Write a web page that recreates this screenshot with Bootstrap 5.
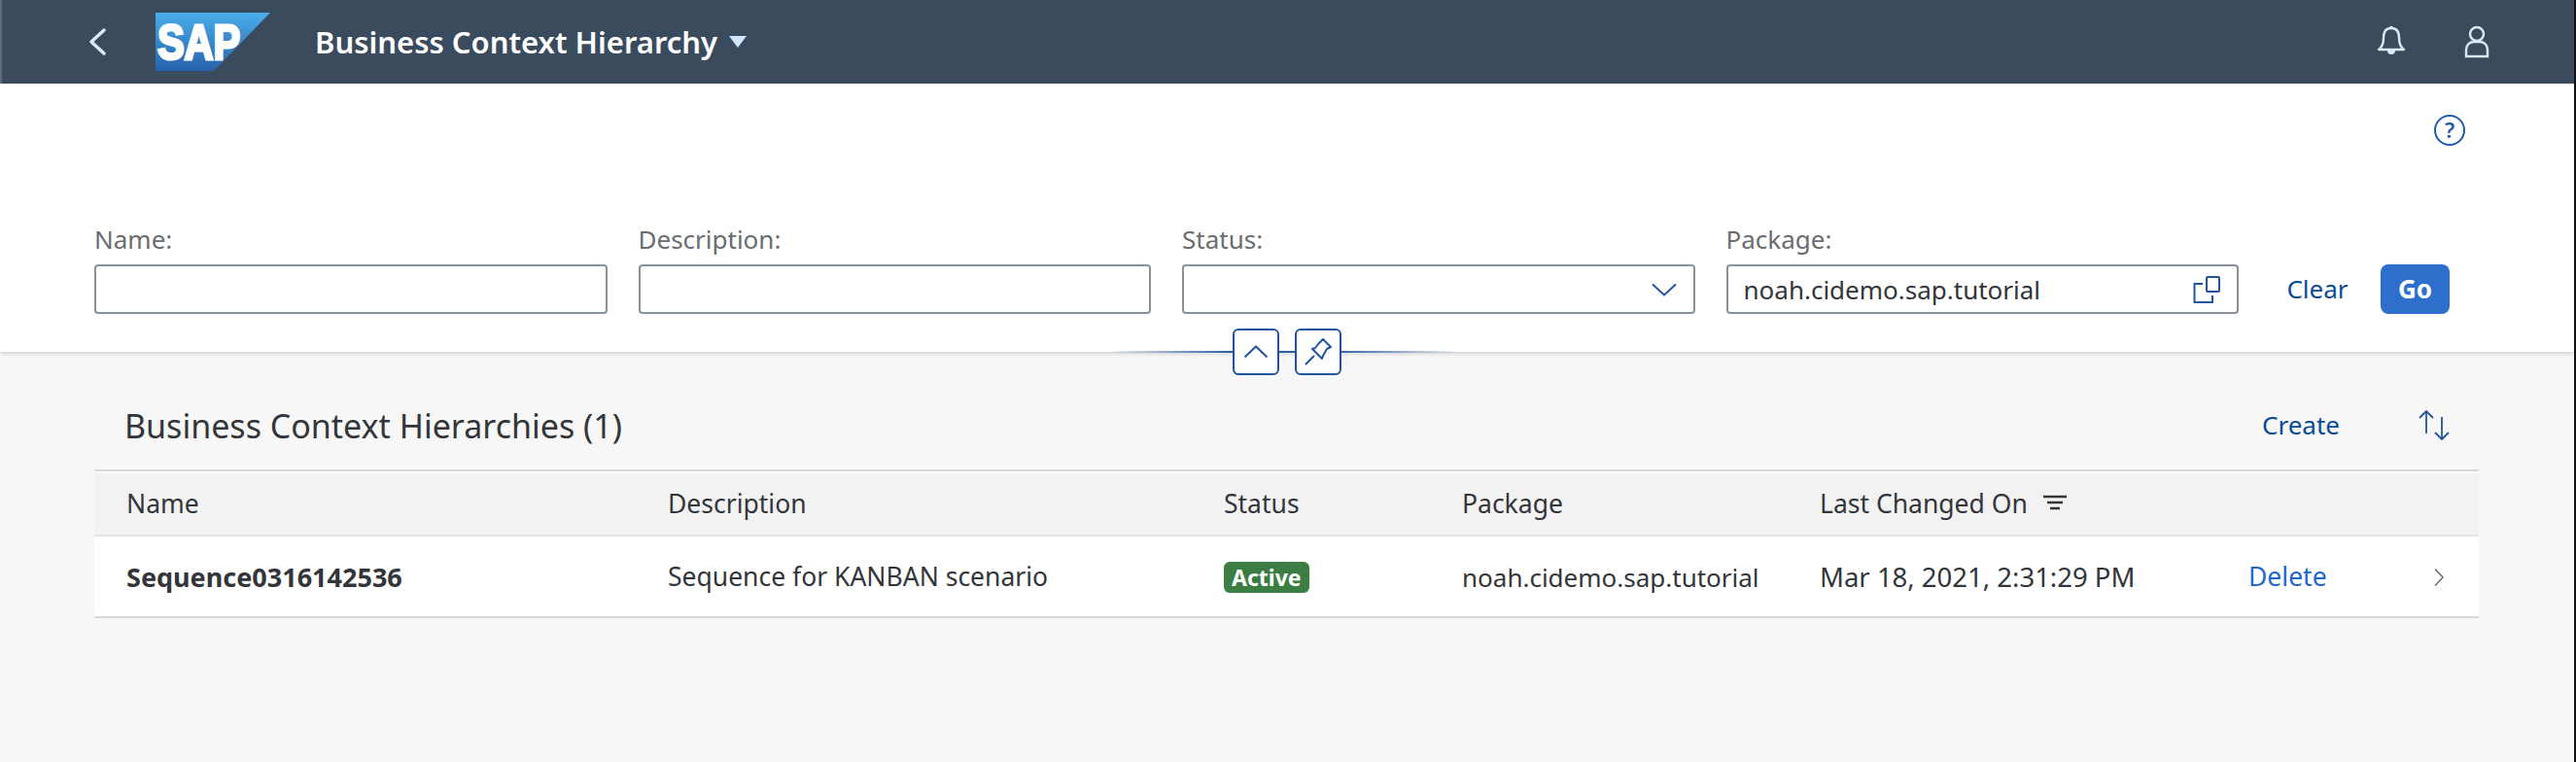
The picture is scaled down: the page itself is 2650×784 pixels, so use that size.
<!DOCTYPE html>
<html lang="en">
<head>
    <meta charset="UTF-8">
    <meta name="viewport" content="width=device-width, initial-scale=1.0">
    <title>Business Context Hierarchy</title>
    <link href="https://cdn.jsdelivr.net/npm/bootstrap@5.3.3/dist/css/bootstrap.min.css" rel="stylesheet">
    <style>
        html, body { height: 100%; }
        body { font-family: "Noto Sans", "Liberation Sans", sans-serif; font-size: 26px; color: #32363a; background: #f7f7f7; overflow: hidden; border-right: 2px solid #111; }
        svg { display: block; }

        .shell-bar { height: 86px; background: #3a4b5e; padding: 0 87px 0 0; flex-wrap: nowrap; border-left: 2px solid #5f6c7b; }
        .shell-back { margin-left: 86px; width: 24px; }
        .shell-logo { margin-left: 48px; }
        .shell-title { margin: 0 0 0 46px; padding: 0; font-size: 31px; font-weight: 600; color: #fff; line-height: 1; }
        .shell-caret { margin-left: 12px; }
        .shell-icons { gap: 60px; }

        .filter-bar { height: 276px; background: #fff; padding: 32px 112px 39px 97px; box-shadow: 0 2px 4px rgba(0,0,0,.15); position: relative; z-index: 2; }
        .filter-row { gap: 32px; }
        .filter-field { width: 527.5px; flex: none; }
        .filter-label { margin: 0 0 11px; font-size: 26px; line-height: 30px; color: #6a6d70; display: block; }
        .filter-input { height: 51px; border: 2px solid #89919a; border-radius: 4px; padding: 0 56px 0 16px; font-size: 26px; color: #32363a; box-shadow: none; }
        .input-icon { position: absolute; right: 19px; top: 50%; transform: translateY(-50%); }
        .btn-clear { color: #0a4a96; font-size: 26px; padding: 0; border: 0; width: 98px; height: 51px; flex: none; }
        .btn-go { background: #2f6fcc; border: 0; color: #fff; font-size: 26px; font-weight: 700; width: 71px; height: 51px; border-radius: 8px; padding: 0; margin-left: -16px; flex: none; }

        .collapse-bar { position: absolute; left: 1140px; top: 252px; width: 360px; height: 48px; }
        .collapse-line { position: absolute; left: 0; right: 0; top: 23px; height: 2px; background: linear-gradient(90deg, rgba(10,74,150,0), #2a5ea6 35%, #2a5ea6 65%, rgba(10,74,150,0)); }
        .collapse-btn { position: absolute; top: 0; width: 48px; height: 48px; border: 2px solid #1f569f; border-radius: 6px; background: #fff; padding: 0; display: flex; align-items: center; justify-content: center; }

        .list-wrap { padding: 0 98px 0 97px; }
        .list-toolbar { height: 121px; padding: 30px 30px 0 31px; }
        .list-title { font-size: 34px; font-weight: 400; margin: 0; color: #32363a; line-height: 1; }
        .toolbar-link { color: #0a4a96; text-decoration: none; font-size: 26px; margin-right: 80px; }

        .hier-table { margin: 0; table-layout: fixed; width: 100%; border-collapse: separate; border-spacing: 0; border-top: 2px solid #d9d9d9; }
        .hier-table th { background: #f2f2f2; height: 67px; font-weight: 400; font-size: 26.500px; color: #32363a; border-top: 2px solid #fafafa; border-bottom: 2px solid #e4e4e4; padding: 0 0 0 33px; vertical-align: middle; }
        .hier-table td { background: #fff; height: 84px; font-size: 26.500px; color: #32363a; border-bottom: 2px solid #d9d9d9; padding: 2px 0 0 33px; vertical-align: middle; white-space: nowrap; }
        .hier-table td.seq-name { font-size: 27px; }
        .hier-table td.date-cell { font-size: 27.500px; }
        .hier-table td.pkg-cell { font-size: 26px; }
        .status-pill { background: #3b7d43; color: #fff; font-size: 23px; font-weight: 700; line-height: 32px; border-radius: 6px; padding: 0 8px; display: inline-block; }
        .delete-link { color: #1e68cc; text-decoration: none; }
    </style>
</head>
<body>
    <nav class="navbar shell-bar">
        <div class="d-flex align-items-center">
            <svg class="shell-back" width="24" height="30" viewBox="0 0 24 30"><path d="M19 3 6 15l13 12" fill="none" stroke="#d9e8fb" stroke-width="3.500" stroke-linecap="round" stroke-linejoin="round"/></svg>
            <svg class="shell-logo" width="118" height="60" viewBox="0 0 118 60">
                <defs><linearGradient id="sapGrad" x1="0" y1="0" x2="0" y2="1"><stop offset="0" stop-color="#4aaeea"/><stop offset="1" stop-color="#2661ac"/></linearGradient></defs>
                <polygon points="0,0 118,0 60,60 0,60" fill="url(#sapGrad)"/>
                <text x="2" y="48" font-family="Liberation Sans" font-weight="700" font-size="50" textLength="85" lengthAdjust="spacingAndGlyphs" fill="#fff" stroke="#fff" stroke-width="3">SAP</text>
            </svg>
            <span class="navbar-brand shell-title">Business Context Hierarchy</span>
            <svg class="shell-caret" width="18" height="13" viewBox="0 0 18 13"><polygon points="0,0 18,0 9,12" fill="#d1e5ff"/></svg>
        </div>
        <div class="d-flex align-items-center shell-icons">
            <svg width="30" height="34" viewBox="0 0 30 34"><path d="M15 3c-6 0-8 4-8 10 0 6-1 9-5 12h26c-4-3-5-6-5-12 0-6-2-10-8-10Z" fill="none" stroke="#d9e8fb" stroke-width="2.400" stroke-linejoin="round"/><path d="M11 26h8c0 3-2 4-4 4s-4-1-4-4Z" fill="#d9e8fb"/><circle cx="15" cy="2.500" r="1.800" fill="#d9e8fb"/></svg>
            <svg width="26" height="34" viewBox="0 0 26 34"><circle cx="13" cy="9" r="7" fill="none" stroke="#d9e8fb" stroke-width="2.400"/><path d="M2 32V25c0-5 4-8 8-8h6c4 0 8 3 8 8v7Z" fill="none" stroke="#d9e8fb" stroke-width="2.400"/></svg>
        </div>
    </nav>

    <div class="filter-bar d-flex flex-column justify-content-between">
        <div class="d-flex justify-content-end">
            <svg width="32" height="32" viewBox="0 0 32 32"><circle cx="16" cy="16" r="15" fill="none" stroke="#1f5ba8" stroke-width="2"/><text x="16" y="24" text-anchor="middle" font-family="Noto Sans" font-weight="600" font-size="22" fill="#1f5ba8">?</text></svg>
        </div>
        <form class="d-flex align-items-end filter-row">
            <div class="filter-field">
                <label class="filter-label" for="fName">Name:</label>
                <input class="form-control filter-input" id="fName" type="text">
            </div>
            <div class="filter-field">
                <label class="filter-label" for="fDesc">Description:</label>
                <input class="form-control filter-input" id="fDesc" type="text">
            </div>
            <div class="filter-field">
                <label class="filter-label" for="fStatus">Status:</label>
                <div class="position-relative">
                    <input class="form-control filter-input" id="fStatus" type="text">
                    <svg class="input-icon" width="26" height="14" viewBox="0 0 26 14"><path d="M1 1.500 13 12.500 25 1.500" fill="none" stroke="#1f569f" stroke-width="2"/></svg>
                </div>
            </div>
            <div class="filter-field">
                <label class="filter-label" for="fPkg">Package:</label>
                <div class="position-relative">
                    <input class="form-control filter-input" id="fPkg" type="text" value="noah.cidemo.sap.tutorial">
                    <svg class="input-icon" width="28" height="28" viewBox="0 0 28 28"><rect x="14" y="1" width="13" height="15" rx="1" fill="none" stroke="#1f569f" stroke-width="2"/><path d="M10 8H1.500V27H20V20" fill="none" stroke="#1f569f" stroke-width="2"/></svg>
                </div>
            </div>
            <button type="button" class="btn btn-link btn-clear text-decoration-none">Clear</button>
            <button type="button" class="btn btn-go">Go</button>
        </form>
        <div class="collapse-bar">
            <div class="collapse-line"></div>
            <button type="button" class="collapse-btn" style="left: 128px"><svg width="26" height="14" viewBox="0 0 26 14"><path d="M1.500 12.500 13 1.500l11.500 11" fill="none" stroke="#1f569f" stroke-width="2"/></svg></button>
            <button type="button" class="collapse-btn" style="left: 192px"><svg width="28" height="28" viewBox="0 0 28 28"><path d="M1 27 10 18M15 5l4-4 8 8-4 2-4 7-1 3-10-10 3-1Z" fill="none" stroke="#1f569f" stroke-width="2" stroke-linejoin="round"/></svg></button>
        </div>
    </div>

    <div class="list-wrap">
        <div class="d-flex justify-content-between align-items-center list-toolbar">
            <h2 class="list-title">Business Context Hierarchies (1)</h2>
            <div class="d-flex align-items-center">
                <a class="toolbar-link" href="#">Create</a>
                <svg width="33" height="33" viewBox="0 0 33 33"><path d="M9 25V2M2 9l7-7 7 7M25 8v23M18 24l7 7 7-7" fill="none" stroke="#1f569f" stroke-width="1.800"/></svg>
            </div>
        </div>
        <table class="table hier-table">
            <colgroup>
                <col style="width: 557px"><col style="width: 572px"><col style="width: 245px"><col style="width: 368px"><col style="width: 441px"><col style="width: 190px"><col>
            </colgroup>
            <thead>
                <tr>
                    <th>Name</th><th>Description</th><th>Status</th><th>Package</th>
                    <th><span class="d-inline-flex align-items-center gap-3">Last Changed On <svg width="24" height="20" viewBox="0 0 24 20"><path d="M0 2h24M4 8h16M7 14h10" stroke="#32363a" stroke-width="2.400"/></svg></span></th>
                    <th></th><th></th>
                </tr>
            </thead>
            <tbody>
                <tr>
                    <td class="fw-bold seq-name">Sequence0316142536</td>
                    <td>Sequence for KANBAN scenario</td>
                    <td><span class="status-pill">Active</span></td>
                    <td class="pkg-cell">noah.cidemo.sap.tutorial</td>
                    <td class="date-cell">Mar 18, 2021, 2:31:29 PM</td>
                    <td><a class="delete-link" href="#">Delete</a></td>
                    <td><svg width="12" height="20" viewBox="0 0 12 20"><path d="M2 1.500 10 10 2 18.500" fill="none" stroke="#6a6d70" stroke-width="1.500"/></svg></td>
                </tr>
            </tbody>
        </table>
    </div>
</body>
</html>
